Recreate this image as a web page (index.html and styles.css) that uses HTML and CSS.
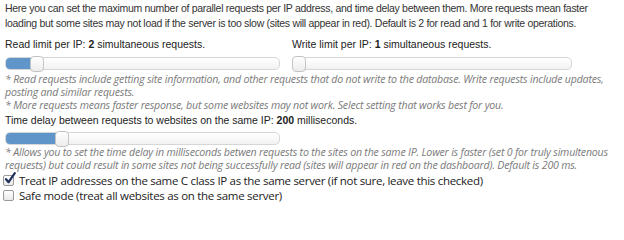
FILE: index.html
```html
<!DOCTYPE html>
<html>
<head>
<meta charset="utf-8">
<link rel="stylesheet" href="styles.css">
</head>
<body>
<div class="panel">
  <p class="intro">Here you can set the maximum number of parallel requests per IP address, and time delay between them. More requests mean faster loading but some sites may not load if the server is too slow (sites will appear in red). Default is 2 for read and 1 for write operations.</p>

  <div class="limits">
    <div class="limit read">
      <div class="label">Read limit per IP: <b>2</b> simultaneous requests.</div>
      <div class="slider"><div class="fill" style="width:25px"></div><div class="handle"></div></div>
    </div>
    <div class="limit write">
      <div class="label">Write limit per IP: <b>1</b> simultaneous requests.</div>
      <div class="slider"><div class="fill" style="width:0px"></div><div class="handle"></div></div>
    </div>
  </div>

  <div class="notes">
    <p class="note">* Read requests include getting site information, and other requests that do not write to the database. Write requests include updates, posting and similar requests.</p>
    <p class="note">* More requests means faster response, but some websites may not work. Select setting that works best for you.</p>
  </div>

  <div class="label delay-label">Time delay between requests to websites on the same IP: <b>200</b> milliseconds.</div>
  <div class="slider delay"><div class="fill" style="width:50px"></div><div class="handle"></div></div>

  <p class="note allows">* Allows you to set the time delay in milliseconds betwen requests to the sites on the same IP. Lower is faster (set 0 for truly simultenous requests) but could result in some sites not being successfully read (sites will appear in red on the dashboard). Default is 200 ms.</p>

  <div class="checks">
    <label class="check">
      <span class="box"><svg width="14" height="14" viewBox="0 0 14 14"><path d="M3 7.2 L5.6 10.2 L11.8 1.2" fill="none" stroke="#1d2f5a" stroke-width="2.2" stroke-linecap="round" stroke-linejoin="round"/></svg></span>
      <span>Treat IP addresses on the same C class IP as the same server (if not sure, leave this checked)</span>
    </label>
    <label class="check">
      <span class="box"></span>
      <span>Safe mode (treat all websites as on the same server)</span>
    </label>
  </div>
</div>
</body>
</html>
```
FILE: styles.css
```css
html, body {
  margin: 0;
  padding: 0;
  background: #ffffff;
}
.panel {
  padding: 1px 5px 0 5px;
  font-family: "Liberation Sans", Arial, sans-serif;
  font-size: 10.5px;
  color: #333333;
}
.intro {
  margin: 0;
  line-height: 15px;
  letter-spacing: -0.3px;
  width: 612px;
}
.limits {
  display: flex;
  gap: 12px;
  margin-top: 6px;
}
.limit.read { width: 275px; }
.limit.write { width: 280px; }
.label {
  line-height: 15px;
  color: #222222;
}
.label b { font-weight: bold; }
.slider {
  position: relative;
  height: 11px;
  margin-top: 5px;
  border: 1px solid #d6d6d6;
  border-radius: 5px;
  background: linear-gradient(#ffffff, #f2f2f2);
}
.fill {
  height: 100%;
  background: #5f95c8;
  border-radius: 4px 0 0 4px;
}
.handle {
  position: absolute;
  top: -2px;
  width: 12px;
  height: 14px;
  border: 1px solid #c4c4c4;
  border-radius: 4px;
  background: linear-gradient(#ffffff, #ececec);
}
.read .handle { left: 24px; }
.write .handle { left: -1px; }
.delay .handle { left: 49px; }
.notes { margin-top: 3px; }
.note {
  margin: 0;
  font-family: "Open Sans", sans-serif;
  font-style: italic;
  font-size: 10.6px;
  letter-spacing: -0.2px;
  line-height: 13px;
  color: #7a7a7a;
  width: 614px;
}
.delay-label { margin-top: 1px; }
.slider.delay { width: 273px; margin-top: 4px; }
.allows { margin-top: 1px; }
.checks { margin-top: 1px; }
.check {
  display: flex;
  align-items: center;
  font-family: "Open Sans", sans-serif;
  font-size: 11.5px;
  letter-spacing: -0.3px;
  line-height: 15px;
  color: #222222;
  margin-left: -2px;
}
.box {
  position: relative;
  width: 9px;
  height: 9px;
  border: 1px solid #9a9a9a;
  border-radius: 2px;
  background: linear-gradient(#ffffff, #e9e9e9);
  margin-right: 5px;
  flex: none;
}
.box svg {
  position: absolute;
  left: -1px;
  top: -4px;
}
```
